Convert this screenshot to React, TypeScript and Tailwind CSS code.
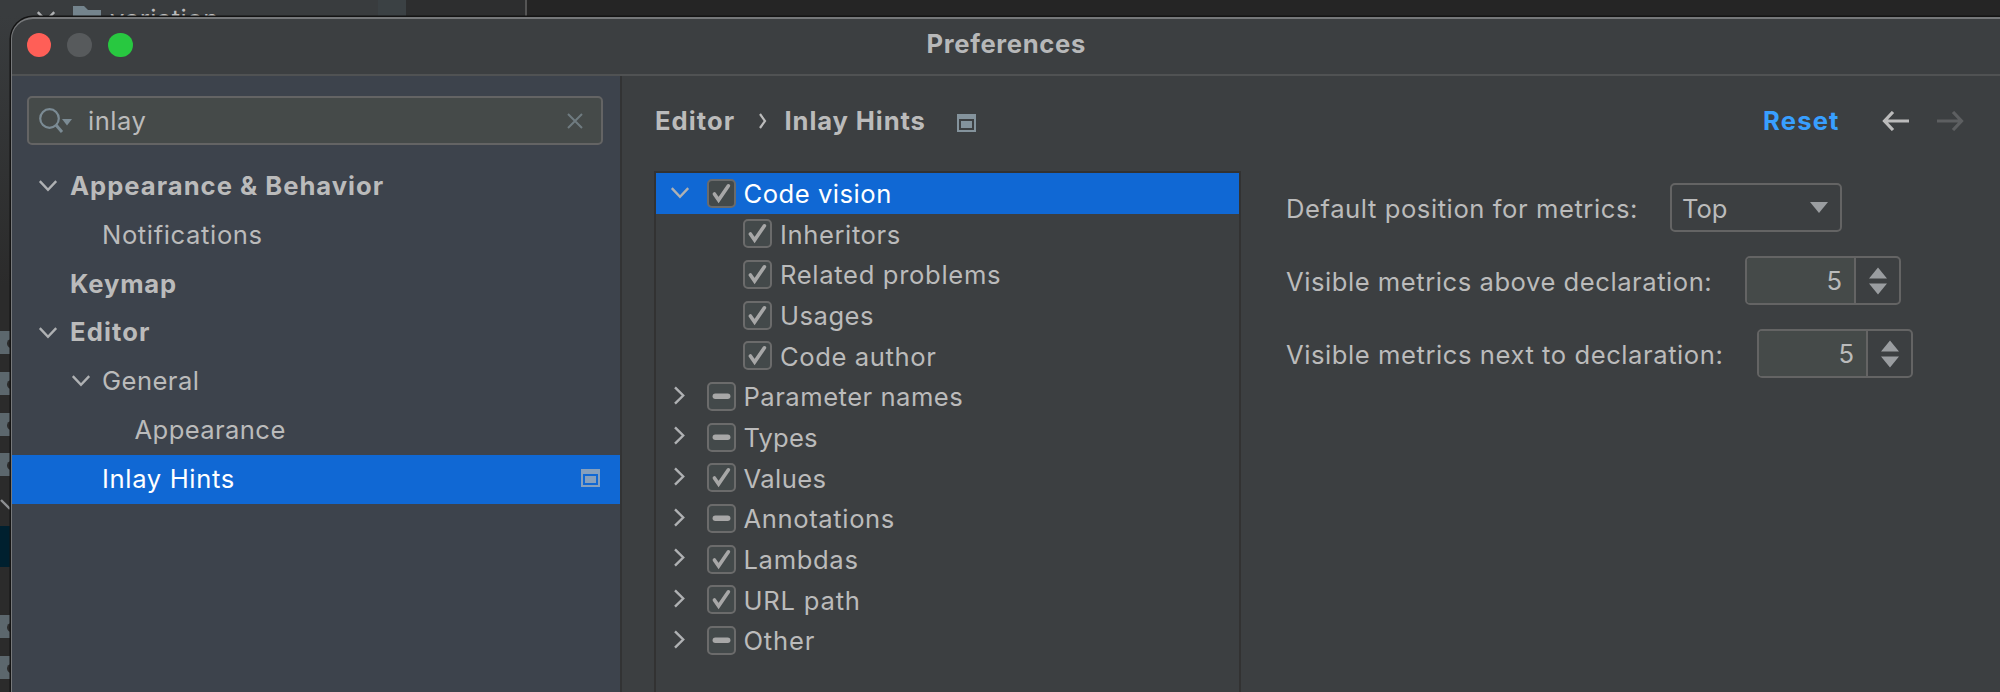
import React from "react";

type State = "on" | "mixed";

const Chevron = ({ open, className = "" }: { open: boolean; className?: string }) => (
  <svg viewBox="0 0 24 24" className={`h-6 w-6 shrink-0 ${className}`} fill="none" stroke="#afb1b3" strokeWidth="2.4">
    {open ? <path d="M3.8 7.2 L12 15.8 L20.2 7.2" /> : <path d="M7 2.3 L15.2 10.5 L7 18.7" />}
  </svg>
);

const Check = ({ state }: { state: State }) => (
  <span className="flex h-[29px] w-[29px] shrink-0 items-center justify-center rounded-[5px] border-2 border-[#6b6b6b] bg-[#43494a]">
    <svg viewBox="0 0 25 25" className="h-[25px] w-[25px]" fill="none" stroke="#a7a7a7">
      {state === "on" ? (
        <path d="M5.4 13 L9.6 19 L19.4 4.8" strokeWidth="3.6" strokeLinecap="round" />
      ) : (
        <path d="M6.3 12.3 H18.7" strokeWidth="5.4" strokeLinecap="round" />
      )}
    </svg>
  </span>
);

const ProjectIcon = ({ className = "" }: { className?: string }) => (
  <svg viewBox="0 0 19 18" className={`h-[18px] w-[19px] shrink-0 ${className}`} fill="currentColor">
    <path fillRule="evenodd" d="M0 0H19V18H0Z M2 5V16H17V5Z" />
    <rect x="4" y="7" width="11" height="7" />
  </svg>
);

const settings = [
  { label: "Appearance & Behavior", pad: "pl-[24px]", bold: true, arrow: true, track: "tracking-[1px]" },
  { label: "Notifications", pad: "pl-[57px]", bold: false, arrow: false, track: "tracking-[0.62px]" },
  { label: "Keymap", pad: "pl-[24px]", bold: true, arrow: false, track: "tracking-[0.85px]" },
  { label: "Editor", pad: "pl-[24px]", bold: true, arrow: true, track: "tracking-[1.1px]" },
  { label: "General", pad: "pl-[57px]", bold: false, arrow: true, track: "tracking-[0.45px]" },
  { label: "Appearance", pad: "pl-[89.5px]", bold: false, arrow: false, track: "tracking-[0.4px]" },
  { label: "Inlay Hints", pad: "pl-[57px]", bold: false, arrow: false, track: "tracking-[0.65px]", selected: true },
];

const hints: { label: string; state: State; track: string; child?: boolean; open?: boolean }[] = [
  { label: "Code vision", state: "on", track: "tracking-[0.52px]", open: true },
  { label: "Inheritors", state: "on", track: "tracking-[0.6px]", child: true },
  { label: "Related problems", state: "on", track: "tracking-[0.67px]", child: true },
  { label: "Usages", state: "on", track: "tracking-[0.5px]", child: true },
  { label: "Code author", state: "on", track: "tracking-[0.6px]", child: true },
  { label: "Parameter names", state: "mixed", track: "tracking-[0.5px]" },
  { label: "Types", state: "mixed", track: "tracking-[0.15px]" },
  { label: "Values", state: "on", track: "tracking-[0.4px]" },
  { label: "Annotations", state: "mixed", track: "tracking-[0.62px]" },
  { label: "Lambdas", state: "on", track: "tracking-[0.65px]" },
  { label: "URL path", state: "on", track: "tracking-[0.78px]" },
  { label: "Other", state: "mixed", track: "tracking-[0.8px]" },
];

const Puzzle = ({ top }: { top: string }) => (
  <span className={`absolute left-0 h-[23px] w-[10px] overflow-hidden bg-[#5c676d] ${top}`}>
    <span className="absolute top-[8px] left-[7px] h-[9px] w-[9px] rounded-full bg-[#2b2b2b]" />
  </span>
);

const Spinner = ({ value }: { value: number }) => (
  <div className="flex h-[49px] w-[156px] overflow-hidden rounded-[5px] border-2 border-[#646464]">
    <span className="flex flex-1 items-center justify-end bg-[#454a49] pt-px pr-[12px]">{value}</span>
    <span className="flex w-[45px] items-center justify-center border-l-2 border-[#646464]">
      <svg viewBox="0 0 18 28" className="h-[28px] w-[18px]" fill="#9a9da0">
        <path d="M9 0.5 L18 11.5 H0Z M0 16.5 H18 L9 27.5Z" />
      </svg>
    </span>
  </div>
);

export default function App() {
  return (
    <div className="relative h-[692px] w-[2000px] overflow-hidden bg-[#2b2b2b] pt-[17px] pl-[11px] font-['Inter',sans-serif] text-[25.6px] leading-none text-[#bbbbbb]">
      <div className="absolute inset-x-0 top-0 flex h-[60px]">
        <div className="flex w-[378px] bg-[#393c3e] pl-[34px]">
          <Chevron open className="mt-[5px]" />
          <svg viewBox="0 0 28 24" className="mt-[6px] ml-[15px] h-6 w-7" fill="#74848d">
            <path d="M0 0H11L15 4H28V24H0Z" />
          </svg>
          <span className="mt-[6px] ml-[9px] tracking-[0.5px]">variation</span>
        </div>
        <div className="w-[28px] bg-[#3b4144]" />
        <div className="w-[121px] border-r-2 border-[#555555] bg-[#2d2e2f]" />
        <div className="flex-1 bg-[#252525]" />
      </div>
      <div className="absolute top-[16px] left-0 h-[676px] w-[20px] bg-gradient-to-b from-[#393c3e] to-[#2b2b2b] to-40%" />
      <Puzzle top="top-[331px]" />
      <Puzzle top="top-[372px]" />
      <Puzzle top="top-[413px]" />
      <Puzzle top="top-[453px]" />
      <svg viewBox="0 0 10 12" className="absolute top-[499px] left-0 h-3 w-[10px]" stroke="#8e9092" strokeWidth="2.4">
        <path d="M1 1 L10 10" />
      </svg>
      <div className="absolute top-[526px] left-0 h-[41px] w-[10px] bg-[#00202f]" />
      <Puzzle top="top-[615px]" />
      <Puzzle top="top-[656px]" />

      <div className="relative flex h-[720px] w-[2010px] flex-col overflow-hidden rounded-[22px] border border-t-2 border-[#76787a] bg-[#3c3f41] shadow-[0_0_0_1.5px_#141414]">
        <header className="flex h-[57px] shrink-0 items-center border-b-2 border-[#505253] pb-[3px] pl-[14.5px]">
          <div className="flex gap-[16.3px]">
            <span className="h-[24.5px] w-[24.5px] rounded-full bg-[#ff5f57]" />
            <span className="h-[24.5px] w-[24.5px] rounded-full bg-[#575a5c]" />
            <span className="h-[24.5px] w-[24.5px] rounded-full bg-[#28c840]" />
          </div>
          <span className="ml-[794px] pb-[3px] font-bold tracking-[0.65px] text-[#b7b8b9]">Preferences</span>
        </header>

        <div className="flex min-h-0 flex-1">
          <aside className="w-[610px] shrink-0 border-r-2 border-[#323334] bg-[#3d434c] pt-[20px]">
            <div className="ml-[15px] flex h-[49px] w-[576px] items-center rounded-[5px] border-2 border-[#646464] bg-[#454a49] pl-[10px]">
              <svg viewBox="0 0 34 26" className="h-[26px] w-[34px]" fill="none" stroke="#7b8b94" strokeWidth="2.2">
                <circle cx="10.5" cy="10.5" r="9.3" />
                <path d="M17 17 L23 24" strokeWidth="3" />
                <path d="M23 11 H33 L28 17.5Z" fill="#7b8b94" stroke="none" />
              </svg>
              <span className="ml-[15px] tracking-[0.5px]">inlay</span>
              <svg viewBox="0 0 16 16" className="mr-[18px] ml-auto h-4 w-4" stroke="#6f7b80" strokeWidth="2">
                <path d="M1 1 L15 15 M15 1 L1 15" />
              </svg>
            </div>
            <ul className="mt-[17.4px]">
              {settings.map((s) => (
                <li
                  key={s.label}
                  className={`flex h-[48.8px] items-center ${s.pad} ${s.bold ? "font-bold" : ""} ${s.selected ? "bg-[#1068d4] text-white" : ""}`}
                >
                  {s.arrow ? <Chevron open className="mr-[9px] mb-px" /> : <span className="w-[33px]" />}
                  <span className={`pb-[2px] ${s.track} ${s.bold ? "pl-px" : ""}`}>{s.label}</span>
                  {s.selected && <ProjectIcon className="mr-[20px] mb-[3px] ml-auto text-[#86a0bd]" />}
                </li>
              ))}
            </ul>
          </aside>

          <main className="flex flex-1 flex-col pl-[32px]">
            <div className="flex h-[95px] items-center pb-[6px]">
              <span className="w-[105px] pl-px font-bold tracking-[1.05px]">Editor</span>
              <svg viewBox="0 0 8 16" className="mr-[16.5px] h-4 w-2" fill="none" stroke="#bbbbbb" strokeWidth="2.2">
                <path d="M1 1 L6 8 L1 15" />
              </svg>
              <span className="w-[173px] pl-px font-bold tracking-[0.9px]">Inlay Hints</span>
              <ProjectIcon className="mt-[4px] text-[#84939c]" />
              <span className="ml-[786.5px] w-[120px] pl-px font-bold tracking-[1.2px] text-[#389fff]">Reset</span>
              <svg viewBox="0 0 28 20" className="h-5 w-7" fill="none" stroke="#bbbbbb" strokeWidth="3.2">
                <path d="M27 10 H3 M11 1 L2.5 10 L11 19" />
              </svg>
              <svg viewBox="0 0 28 20" className="ml-[26px] h-5 w-7" fill="none" stroke="#5d5f61" strokeWidth="3.2">
                <path d="M1 10 H25 M17 1 L25.5 10 L17 19" />
              </svg>
            </div>

            <div className="flex flex-1">
              <ul className="w-[587px] shrink-0 border-2 border-[#323232]">
                {hints.map((h) => (
                  <li
                    key={h.label}
                    className={`flex h-[40.66px] items-center ${h.child ? "pl-[87px]" : "pl-[12px]"} ${h.open ? "bg-[#1068d4] text-white" : ""}`}
                  >
                    {!h.child && <Chevron open={!!h.open} className="mr-[15px]" />}
                    <Check state={h.state} />
                    <span className={`pt-px ${h.child ? "ml-[8px]" : "ml-[7.5px]"} ${h.track}`}>{h.label}</span>
                  </li>
                ))}
              </ul>
              <div className="flex flex-col gap-[24px] pt-[12px] pl-[45px]">
                <div className="flex items-center">
                  <span className="w-[384px] pt-[2px] tracking-[0.57px]">Default position for metrics:</span>
                  <div className="flex h-[49px] w-[172px] items-center justify-between rounded-[5px] border-2 border-[#646464] pr-[12px] pl-[10px]">
                    <span className="pt-[2px]">Top</span>
                    <svg viewBox="0 0 18 11" className="h-[11px] w-[18px]" fill="#9a9da0">
                      <path d="M0 0H18L9 11Z" />
                    </svg>
                  </div>
                </div>
                <div className="flex items-center">
                  <span className="w-[459px] pt-[2px] tracking-[0.54px]">Visible metrics above declaration:</span>
                  <Spinner value={5} />
                </div>
                <div className="flex items-center">
                  <span className="w-[471px] pt-[2px] tracking-[0.56px]">Visible metrics next to declaration:</span>
                  <Spinner value={5} />
                </div>
              </div>
            </div>
          </main>
        </div>
      </div>
    </div>
  );
}
